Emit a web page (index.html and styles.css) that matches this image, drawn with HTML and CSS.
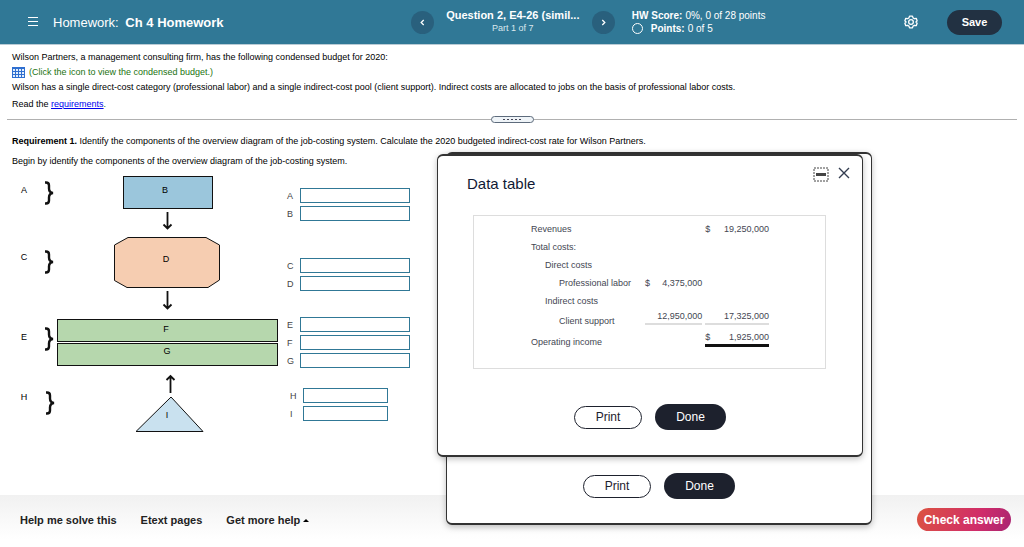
FILE: index.html
```html
<!DOCTYPE html>
<html lang="en">
  <head>
    <meta charset="UTF-8" />
    <meta name="viewport" content="width=device-width, initial-scale=1.0" />
    <title>Ch 4 Homework</title>
    <link rel="stylesheet" href="styles.css">
  </head>
  <body>
    <header>
      <div class="header-left">
        <button class="icon-btn" aria-label="Menu">
          <svg width="12" height="12" viewBox="0 0 12 12" stroke="#fff" stroke-width="1"><path d="M1 1.5h10M1 5.5h10M1 9.5h10" /></svg>
        </button>
        <h1>Homework: <b>Ch 4 Homework</b></h1>
      </div>
      <nav>
        <button class="round-btn" aria-label="Previous question">
          <svg width="7" height="7" viewBox="0 0 7 7" fill="none" stroke="#fff" stroke-width="1.3"><path d="M4.7 1L2.2 3.5L4.7 6" /></svg>
        </button>
        <div class="question">
          <h2>Question 2, E4-26 (simil...</h2>
          <p>Part 1 of 7</p>
        </div>
        <button class="round-btn" aria-label="Next question">
          <svg width="7" height="7" viewBox="0 0 7 7" fill="none" stroke="#fff" stroke-width="1.3"><path d="M2.3 1L4.8 3.5L2.3 6" /></svg>
        </button>
      </nav>
      <div class="score">
        <p><b>HW Score:</b> 0%, 0 of 28 points</p>
        <p><span class="ring"></span><b>Points:</b> 0 of 5</p>
      </div>
      <button class="icon-btn settings" aria-label="Settings">
        <svg width="14" height="14" viewBox="0 0 24 24" fill="none" stroke="#fff" stroke-width="2.2" stroke-linejoin="round"><path d="M9.5 2h5l1 3 2.5 1.4 3-.7 1.5 4.1-2 2.2 2 2.2-1.5 4.1-3-.7-2.5 1.4-1 3h-5l-1-3L6 17.6l-3 .7-1.5-4.1 2-2.2-2-2.2L3 5.7l3 .7L8.5 5z" /><circle cx="12" cy="12" r="4" /></svg>
      </button>
      <button class="save-btn">Save</button>
    </header>

    <main>
      <section class="problem">
        <p>Wilson Partners, a management consulting firm, has the following condensed budget for 2020:</p>
        <p class="budget-link">
          <svg width="13" height="11" viewBox="0 0 13 11"><rect width="13" height="11" fill="#2f6fd0" /><path fill="#e4effc" d="M1 2h2v2H1zM4 2h2v2H4zM7 2h2v2H7zM10 2h2v2h-2zM1 5h2v2H1zM4 5h2v2H4zM7 5h2v2H7zM10 5h2v2h-2zM1 8h2v2H1zM4 8h2v2H4zM7 8h2v2H7zM10 8h2v2h-2z" /></svg>
          <span>(Click the icon to view the condensed budget.)</span>
        </p>
        <p>Wilson has a single direct-cost category (professional labor) and a single indirect-cost pool (client support). Indirect costs are allocated to jobs on the basis of professional labor costs.</p>
        <p class="read">Read the <a href="#">requirements</a><span class="green">.</span></p>
      </section>

      <div class="divider">
        <button class="handle" aria-label="Resize"><i></i><i></i><i></i><i></i><i></i></button>
      </div>

      <section class="work">
        <p><b>Requirement 1.</b> Identify the components of the overview diagram of the job-costing system. Calculate the 2020 budgeted indirect-cost rate for Wilson Partners.</p>
        <p>Begin by identify the components of the overview diagram of the job-costing system.</p>

        <div class="answer-area">
          <svg class="diagram" width="270" height="260" viewBox="12 174 270 260" stroke="#111">
            <!-- boxes -->
            <rect x="123.5" y="176.5" width="89" height="32" fill="#9bc6dc" />
            <path d="M128 237.5H206L219.5 245V280L208 287.5H127L114.5 280.5V245z" fill="#f6cdb1" />
            <rect x="57.5" y="319.5" width="220" height="22" fill="#b6d7ad" />
            <rect x="57.5" y="343.5" width="220" height="22" fill="#b6d7ad" />
            <path d="M171 397L203 431.5H136z" fill="#c9e1ef" />
            <!-- arrows -->
            <g fill="none" stroke-width="1.8">
              <path d="M167.5 212V228M163.5 224.5L167.5 228.5L171.5 224.5" />
              <path d="M167.5 291V308M163.5 304.5L167.5 308.5L171.5 304.5" />
              <path d="M170.5 393V376M166.5 380L170.5 376L174.5 380" />
            </g>
            <!-- braces -->
            <g fill="none" stroke-width="2.4">
              <path id="brace" d="M45 182.5h1q3 0 3 3v3q0 4 4 4.5q-4 .5-4 4.5v3q0 3-3 3h-1" />
              <use href="#brace" y="69" />
              <use href="#brace" y="146" />
              <use href="#brace" x="1" y="210" />
            </g>
            <g class="diagram-labels" stroke="none">
              <text x="24" y="193">A</text>
              <text x="24" y="260">C</text>
              <text x="24" y="340">E</text>
              <text x="24" y="400">H</text>
              <text x="165" y="193">B</text>
              <text x="166" y="262">D</text>
              <text x="166" y="332">F</text>
              <text x="167" y="354">G</text>
              <text x="167" y="418">I</text>
            </g>
          </svg>

          <form class="answers">
            <div class="group group-ab">
              <label for="a">A</label><input id="a" type="text">
              <label for="b">B</label><input id="b" type="text">
            </div>
            <div class="group group-cd">
              <label for="c">C</label><input id="c" type="text">
              <label for="d">D</label><input id="d" type="text">
            </div>
            <div class="group group-eg">
              <label for="e">E</label><input id="e" type="text">
              <label for="f">F</label><input id="f" type="text">
              <label for="g">G</label><input id="g" type="text">
            </div>
            <div class="group group-hi">
              <label for="h">H</label><input id="h" type="text">
              <label for="i">I</label><input id="i" type="text">
            </div>
          </form>
        </div>
      </section>
    </main>

    <footer>
      <button class="help-btn">Help me solve this</button>
      <button class="help-btn">Etext pages</button>
      <button class="help-btn">Get more help <span class="caret"></span></button>
      <button class="check-btn">Check answer</button>
    </footer>

    <div class="modal modal-back">
      <div class="modal-actions">
        <button class="print-btn">Print</button>
        <button class="done-btn">Done</button>
      </div>
    </div>

    <div class="modal modal-front" role="dialog" aria-labelledby="modal-title">
      <div class="modal-header">
        <h3 id="modal-title">Data table</h3>
        <button class="icon-btn" aria-label="Minimize">
          <svg width="16" height="15" viewBox="0 0 16 15"><rect x="1" y="1" width="14" height="13" fill="none" stroke="#444" stroke-dasharray="2 1" /><rect x="3" y="6" width="10" height="3" fill="#444" /></svg>
        </button>
        <button class="icon-btn" aria-label="Close">
          <svg width="12" height="12" viewBox="0 0 12 12" stroke="#333d50" stroke-width="1.4"><path d="M1 1l10 10M11 1L1 11" /></svg>
        </button>
      </div>
      <div class="table-box">
        <table>
          <tr><td>Revenues</td><td></td><td></td><td class="spacer"></td><td>$</td><td class="num">19,250,000</td></tr>
          <tr><td>Total costs:</td></tr>
          <tr><td class="indent-1">Direct costs</td></tr>
          <tr><td class="indent-2">Professional labor</td><td>$</td><td class="num">4,375,000</td></tr>
          <tr><td class="indent-1">Indirect costs</td></tr>
          <tr class="total-row">
            <td class="indent-2">Client support</td>
            <td colspan="2" class="num"><div class="line">12,950,000</div></td>
            <td></td>
            <td colspan="2" class="num"><div class="line">17,325,000</div></td>
          </tr>
          <tr class="total-row">
            <td>Operating income</td>
            <td></td><td></td><td></td>
            <td colspan="2" class="num"><div class="line final"><span>$</span><span>1,925,000</span></div></td>
          </tr>
        </table>
      </div>
      <div class="modal-actions">
        <button class="print-btn">Print</button>
        <button class="done-btn">Done</button>
      </div>
    </div>
  </body>
</html>
```
FILE: styles.css
```css
* {
  margin: 0;
  padding: 0;
  box-sizing: border-box;
}

body {
  font-family: "Liberation Sans", Arial, sans-serif;
  font-size: 9px;
  line-height: 15px;
  color: #000;
  background-color: #fff;
  min-height: 100vh;
  display: flex;
  flex-direction: column;
  position: relative;
}

button {
  font-family: inherit;
  border: none;
  background: none;
  cursor: pointer;
}

svg {
  display: block;
}

header {
  display: flex;
  align-items: center;
  height: 45px;
  padding-right: 22px;
  background-color: #307896;
  border-bottom: 1px solid #b9cbd5;
  color: #fff;
}

.header-left {
  flex: 0 0 41%;
  padding-left: 27px;
  display: flex;
  align-items: center;
  gap: 14px;
}

header h1 {
  font-size: 13px;
  font-weight: normal;
}

header h1 b {
  margin-left: 3px;
}

nav {
  flex: 0 0 204px;
  display: flex;
  align-items: center;
  justify-content: space-between;
}

.round-btn {
  width: 23px;
  height: 23px;
  border-radius: 50%;
  background-color: #29607d;
  display: flex;
  align-items: center;
  justify-content: center;
}

.question {
  text-align: center;
}

.question h2 {
  font-size: 11px;
  line-height: 13px;
}

.question p {
  line-height: 13px;
  color: #dbe8ee;
}

.score {
  margin-left: 17px;
  font-size: 10px;
  line-height: 13px;
  white-space: nowrap;
}

.score p {
  display: flex;
  align-items: center;
  gap: 3px;
}

.ring {
  width: 11px;
  height: 11px;
  border: 1px solid #fff;
  border-radius: 50%;
  margin-right: 5px;
}

.settings {
  margin-left: auto;
}

.save-btn {
  margin-left: 29px;
  width: 55px;
  height: 25px;
  border-radius: 13px;
  background-color: #223142;
  color: #fff;
  font-size: 11px;
  font-weight: bold;
}

main {
  flex: 1;
}

.problem {
  padding: 5px 12px 7px;
}

.budget-link {
  display: flex;
  align-items: center;
  gap: 4px;
  color: #23730f;
}

.read {
  margin-top: 2px;
}

.read a {
  color: #0000ee;
}

.green {
  color: #23730f;
}

.divider {
  height: 1px;
  margin: 0 7px;
  background-color: #b0b0b0;
  display: flex;
  align-items: center;
  justify-content: center;
}

.handle {
  width: 43px;
  height: 7px;
  border: 1px solid #5d6b7c;
  border-radius: 4px;
  background-color: #eff4f8;
  display: flex;
  align-items: center;
  justify-content: center;
  gap: 2px;
}

.handle i {
  width: 2px;
  height: 1px;
  background-color: #445;
}

.work {
  padding: 14px 12px 0;
}

.work p {
  margin-bottom: 5px;
}

.answer-area {
  display: flex;
  align-items: flex-start;
}

.diagram-labels {
  font-size: 9px;
  text-anchor: middle;
}

.answers {
  padding: 14px 0 0 5px;
}

.group {
  display: grid;
  grid-template-columns: 13px 110px;
  row-gap: 3px;
}

.group label {
  color: #444;
  line-height: 17px;
}

.group input {
  width: 100%;
  height: 15px;
  border: 1px solid #307896;
  background-color: #fff;
}

.group-cd {
  margin-top: 37px;
}

.group-eg {
  margin-top: 26px;
}

.group-hi {
  margin: 20px 0 0 3px;
  grid-template-columns: 13px 85px;
}

.group label,
.group input {
  max-height: 15px;
}

footer {
  display: flex;
  align-items: center;
  gap: 24px;
  height: 52px;
  padding: 0 13px 3px 20px;
  background: linear-gradient(#f1f1f1, #fff 85%);
}

.help-btn {
  font-size: 11px;
  font-weight: bold;
  color: #222;
}

.caret {
  display: inline-block;
  vertical-align: middle;
  border: 3px solid transparent;
  border-top: none;
  border-bottom-color: #000;
}

.check-btn {
  margin-left: auto;
  width: 94px;
  height: 23px;
  border-radius: 12px;
  background: linear-gradient(110deg, #dc5340, #d02c6a 65%, #a82672);
  color: #fff;
  font-size: 12px;
  font-weight: bold;
}

/* Pop-up windows, one stacked over the other */
.modal {
  position: absolute;
  width: 426px;
  border: 1px solid #333;
  border-width: 2px 1px;
  border-radius: 6px;
  background-color: #fff;
  box-shadow: 0 2px 6px rgba(0, 0, 0, 0.25);
  display: flex;
  flex-direction: column;
}

.modal-back {
  top: 152px;
  left: 446px;
  height: 373px;
  justify-content: flex-end;
  padding-bottom: 24px;
}

.modal-front {
  top: 154px;
  left: 437px;
  padding: 11px 0 25px;
}

.modal-header {
  display: flex;
  align-items: flex-start;
  gap: 9px;
  padding: 0 12px 0 29px;
}

.modal-header h3 {
  flex: 1;
  padding-top: 7px;
  font-size: 15px;
  line-height: 20px;
  font-weight: normal;
  color: #101a35;
}

.table-box {
  margin: 21px 36px 35px 35px;
  padding: 4px 56px 16px 57px;
  border: 1px solid #ddd;
}

table {
  width: 100%;
  border-collapse: collapse;
  color: #434652;
}

td {
  height: 18px;
  line-height: 12px;
}

td:nth-child(1) {
  width: 114px;
}

.spacer {
  width: 3px;
}

.indent-1 {
  padding-left: 14px;
}

.indent-2 {
  padding-left: 28px;
}

.num {
  text-align: right;
}

.total-row td {
  height: 21px;
}

.total-row .num {
  vertical-align: top;
}

.line {
  padding-bottom: 1px;
  border-bottom: 2px solid #ddd;
}

.final {
  display: flex;
  justify-content: space-between;
  border-bottom: 3px solid #111;
}

.modal-actions {
  display: flex;
  align-items: center;
  justify-content: center;
  gap: 13px;
}

.print-btn,
.done-btn {
  font-size: 12px;
  border-radius: 13px;
}

.print-btn {
  width: 68px;
  height: 23px;
  border: 1px solid #1d212d;
  color: #1d212d;
}

.done-btn {
  width: 71px;
  height: 26px;
  background-color: #1d212d;
  color: #fff;
}
```
